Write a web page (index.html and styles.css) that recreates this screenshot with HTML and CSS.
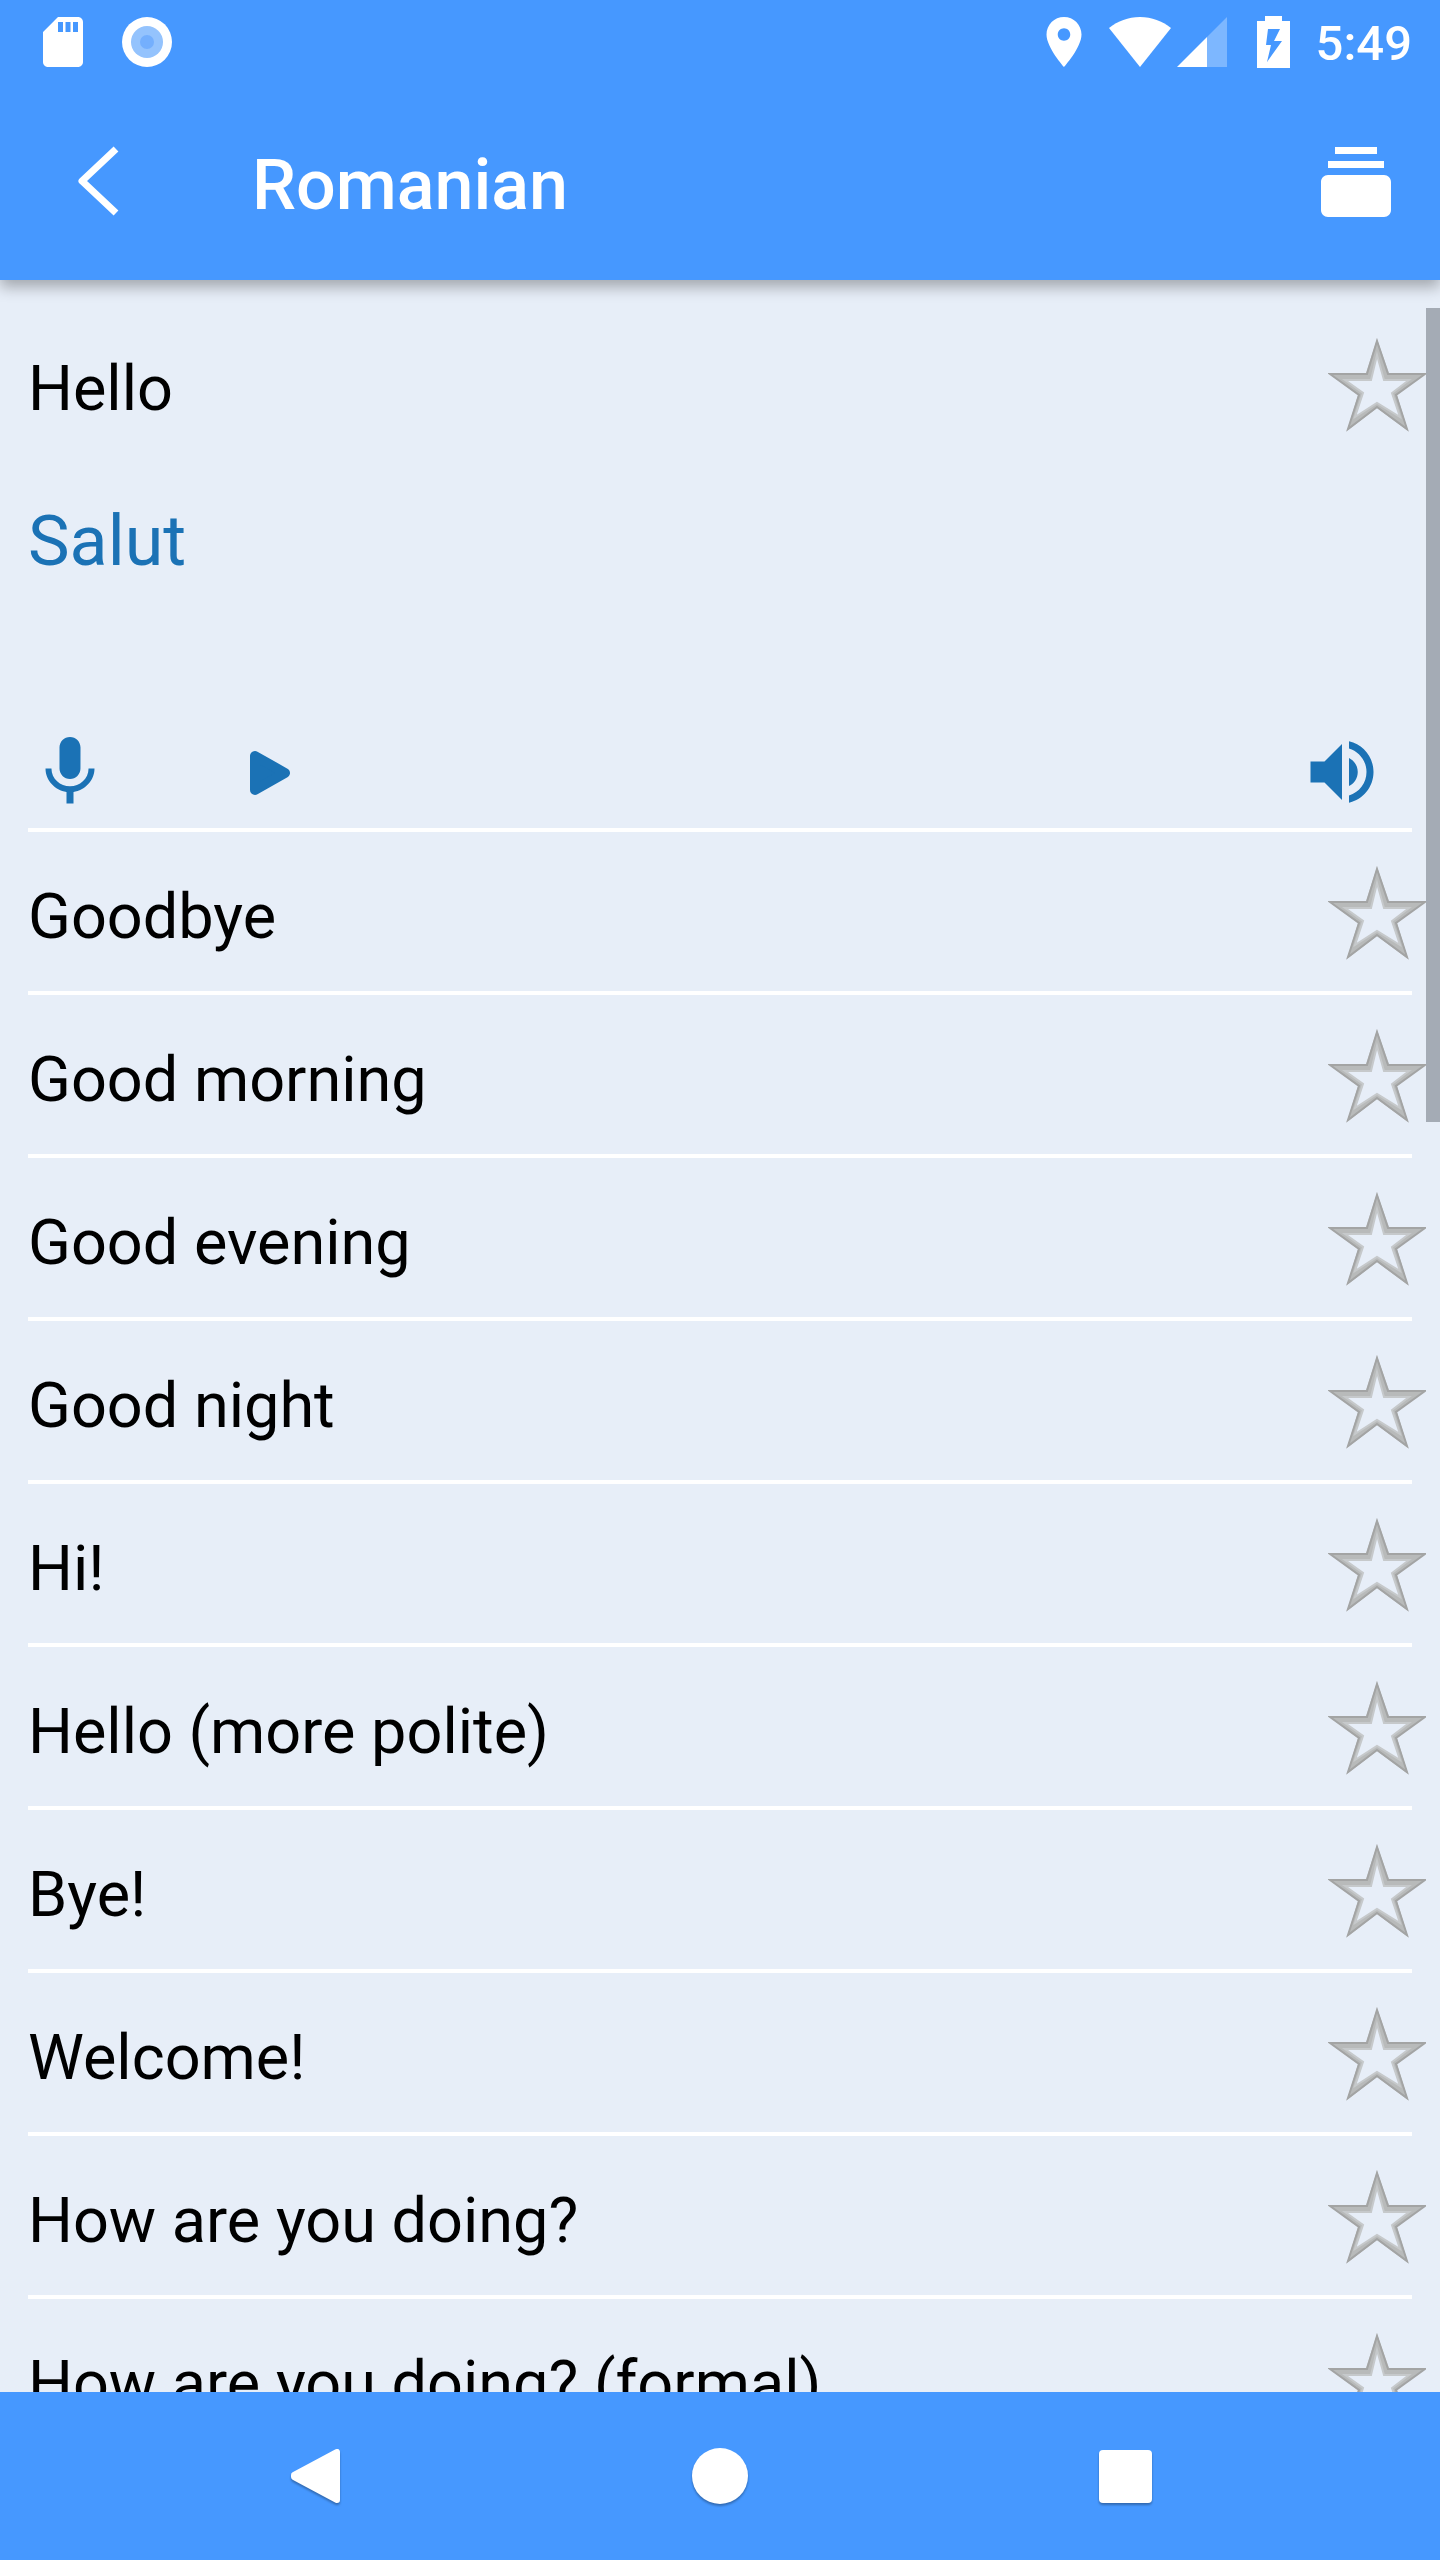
FILE: index.html
```html
<!DOCTYPE html>
<html lang="en">
<head>
    <meta charset="utf-8">
    <meta name="viewport" content="width=device-width, initial-scale=1">
    <title>Romanian</title>
    <link rel="stylesheet" href="styles.css">
</head>
<body>
    <!-- shared icon, used by every row -->
    <svg class="sprite" aria-hidden="true">
        <symbol id="star" viewBox="0 0 98 94">
            <path class="star-band" fill-rule="evenodd" d="M49 1L61 35H98L69 57L80 93L49 70L19 93L30 57L0 35H38zM49 17L43 42H17L35 55L27 79L49 65L72 79L64 55L81 42H56z"/>
            <path class="star-inner" d="M49 17L43 42H17L35 55L27 79L49 65L72 79L64 55L81 42H56z"/>
            <path class="star-edge" d="M49 3L60 36H97L68 57L79 91L49 69L20 91L31 57L2 36H39z"/>
        </symbol>
    </svg>

    <header class="app-header">
        <div class="status-bar">
            <div class="status-left">
                <svg width="60" height="60" viewBox="0 0 24 24"><path d="M18 2h-8L4 8v12c0 1.100.9 2 2 2h12c1.100 0 2-.9 2-2V4c0-1.100-.9-2-2-2zm-6 6h-2V4h2v4zm3 0h-2V4h2v4zm3 0h-2V4h2v4z"/></svg>
                <svg width="60" height="60" viewBox="0 0 60 60">
                    <circle cx="30" cy="30" r="25"/>
                    <circle class="dot-outer" cx="30" cy="30" r="16"/>
                    <circle class="dot-inner" cx="30" cy="30" r="7"/>
                </svg>
            </div>
            <div class="status-right">
                <svg class="location" width="36" height="50" viewBox="5 2 14 20"><path d="M12 2C8.130 2 5 5.130 5 9c0 5.250 7 13 7 13s7-7.750 7-13c0-3.870-3.130-7-7-7zm0 9.500c-1.380 0-2.500-1.120-2.500-2.500s1.120-2.500 2.500-2.500 2.500 1.120 2.500 2.500-1.120 2.500-2.500 2.500z"/></svg>
                <svg class="wifi" width="62" height="50" viewBox="0 0 62 50"><path d="M31 50L0 11C9 4 19 0 31 0s22 4 31 11z"/></svg>
                <svg class="signal" width="50" height="50" viewBox="0 0 50 50">
                    <path class="signal-empty" d="M30 20L50 0v50H30z"/>
                    <path d="M0 50l30-30v30z"/>
                </svg>
                <svg class="battery" width="33" height="52" viewBox="0 0 33 52"><path fill-rule="evenodd" d="M8 0h17v5h8v47H0V5h8zM11 13L9 29h5L10 46L25 25h-8l6-12z"/></svg>
                <span class="clock">5:49</span>
            </div>
        </div>
        <div class="toolbar">
            <button class="icon-btn" aria-label="Back">
                <svg width="84" height="84" viewBox="0 0 84 84"><path class="chevron" d="M60 9L26 41L60 73"/></svg>
            </button>
            <h1>Romanian</h1>
            <button class="icon-btn" aria-label="Flashcards">
                <svg width="84" height="84" viewBox="0 0 24 24"><path d="M20 8H4V6h16v2zm-2-6H6v2h12V2zm4 10v8c0 1.100-.9 2-2 2H4c-1.100 0-2-.9-2-2v-8c0-1.100.9-2 2-2h16c1.100 0 2 .9 2 2z"/></svg>
            </button>
        </div>
    </header>

    <main class="content">
        <ul class="phrases">
            <li>
                <div class="phrase">
                    <span>Hello</span>
                    <button class="star-btn" aria-label="Favorite Hello"><svg><use href="#star"/></svg></button>
                </div>
                <p class="translation" lang="ro">Salut</p>
                <div class="controls">
                    <button class="icon-btn" aria-label="Record">
                        <svg width="84" height="84" viewBox="0 1 24 24"><path d="M12 15c1.660 0 2.990-1.340 2.990-3L15 6c0-1.660-1.340-3-3-3S9 4.340 9 6v6c0 1.660 1.340 3 3 3zm5.300-3c0 3-2.540 5.100-5.300 5.100S6.700 15 6.700 12H5c0 3.420 2.720 6.230 6 6.720V22h2v-3.280c3.280-.48 6-3.300 6-6.720h-1.700z"/></svg>
                    </button>
                    <button class="icon-btn" aria-label="Play recording">
                        <svg width="84" height="84" viewBox="0 0 84 84"><path class="play" d="M31 26V60L61 43z"/></svg>
                    </button>
                    <button class="icon-btn speak" aria-label="Listen">
                        <svg width="84" height="84" viewBox="0 0 24 24"><path d="M3 9v6h4l5 5V4L7 9H3zm13.500 3c0-1.770-1.020-3.290-2.500-4.030v8.050c1.480-.73 2.500-2.250 2.500-4.020zM14 3.230v2.060c2.890.86 5 3.540 5 6.710s-2.110 5.850-5 6.710v2.060c4.010-.91 7-4.490 7-8.770s-2.990-7.860-7-8.770z"/></svg>
                    </button>
                </div>
            </li>
            <li>
                <div class="phrase">
                    <span>Goodbye</span>
                    <button class="star-btn" aria-label="Favorite Goodbye"><svg><use href="#star"/></svg></button>
                </div>
            </li>
            <li>
                <div class="phrase">
                    <span>Good morning</span>
                    <button class="star-btn" aria-label="Favorite Good morning"><svg><use href="#star"/></svg></button>
                </div>
            </li>
            <li>
                <div class="phrase">
                    <span>Good evening</span>
                    <button class="star-btn" aria-label="Favorite Good evening"><svg><use href="#star"/></svg></button>
                </div>
            </li>
            <li>
                <div class="phrase">
                    <span>Good night</span>
                    <button class="star-btn" aria-label="Favorite Good night"><svg><use href="#star"/></svg></button>
                </div>
            </li>
            <li>
                <div class="phrase">
                    <span>Hi!</span>
                    <button class="star-btn" aria-label="Favorite Hi!"><svg><use href="#star"/></svg></button>
                </div>
            </li>
            <li>
                <div class="phrase">
                    <span>Hello (more polite)</span>
                    <button class="star-btn" aria-label="Favorite Hello (more polite)"><svg><use href="#star"/></svg></button>
                </div>
            </li>
            <li>
                <div class="phrase">
                    <span>Bye!</span>
                    <button class="star-btn" aria-label="Favorite Bye!"><svg><use href="#star"/></svg></button>
                </div>
            </li>
            <li>
                <div class="phrase">
                    <span>Welcome!</span>
                    <button class="star-btn" aria-label="Favorite Welcome!"><svg><use href="#star"/></svg></button>
                </div>
            </li>
            <li>
                <div class="phrase">
                    <span>How are you doing?</span>
                    <button class="star-btn" aria-label="Favorite How are you doing?"><svg><use href="#star"/></svg></button>
                </div>
            </li>
            <li>
                <div class="phrase">
                    <span>How are you doing? (formal)</span>
                    <button class="star-btn" aria-label="Favorite How are you doing? (formal)"><svg><use href="#star"/></svg></button>
                </div>
            </li>
        </ul>
        <div class="scrollbar"></div>
    </main>

    <nav class="nav-bar">
        <button aria-label="Back">
            <svg width="60" height="60" viewBox="0 0 60 60"><path class="nav-back" d="M52 6V54L9 31V29z"/></svg>
        </button>
        <button aria-label="Home">
            <svg width="60" height="60" viewBox="0 0 60 60"><circle cx="30" cy="30" r="28"/></svg>
        </button>
        <button aria-label="Recent apps">
            <svg width="60" height="60" viewBox="0 0 60 60"><rect x="4" y="4" width="53" height="53" rx="4"/></svg>
        </button>
    </nav>
</body>
</html>
```

FILE: styles.css
```css
* {
    box-sizing: border-box;
}

body {
    margin: 0;
    height: 100vh;
    display: flex;
    flex-direction: column;
    overflow: hidden;
    background: #e7eef8;
    color: #000;
    font-family: Roboto, sans-serif;
}

button {
    background: none;
    border: none;
    padding: 0;
    cursor: pointer;
    color: inherit;
}

svg {
    display: block;
    flex-shrink: 0;
    fill: currentColor;
}

.sprite {
    position: absolute;
    width: 0;
    height: 0;
}

/* Header */
.app-header {
    position: relative;
    z-index: 2;
    flex-shrink: 0;
    background: #4698ff;
    color: white;
    box-shadow: 0 7px 14px rgba(0,0,0,0.3);
}

.status-bar {
    height: 84px;
    padding: 0 28px 0 33px;
    display: flex;
    justify-content: space-between;
    align-items: center;
}

.status-left, .status-right {
    display: flex;
    align-items: center;
}

.status-left {
    gap: 24px;
}

.dot-outer {
    fill: #94c3fd;
}

.dot-inner {
    fill: #74affd;
}

.location {
    margin-right: 27px;
}

.wifi {
    margin-right: 6px;
}

.signal {
    margin-right: 30px;
}

.signal-empty {
    opacity: 0.3;
}

.battery {
    margin-right: 26px;
}

.clock {
    padding-top: 4px;
    font-size: 49px;
    font-weight: 500;
    line-height: 56px;
}

.toolbar {
    height: 196px;
    padding: 0 42px 0 56px;
    display: flex;
    align-items: center;
}

.toolbar h1 {
    flex: 1;
    margin: 0 0 0 112px;
    padding-top: 6px;
    font-size: 70px;
    font-weight: 500;
    line-height: 84px;
}

.chevron {
    fill: none;
    stroke: currentColor;
    stroke-width: 7;
    stroke-linejoin: round;
}

/* Phrase list */
.content {
    position: relative;
    flex: 1;
    min-height: 0;
    overflow: hidden;
}

.phrases {
    list-style: none;
    margin: 0 28px;
    padding: 24px 0 0;
}

.phrases li {
    border-bottom: 4px solid white;
}

.phrase {
    display: flex;
    justify-content: space-between;
    align-items: flex-start;
    padding: 34px 0 31px;
    font-size: 63px;
    line-height: 94px;
}

.phrase span {
    padding-top: 4px;
    margin-bottom: -4px;
}

.star-btn {
    margin-right: -14px;
}

.star-btn svg {
    width: 98px;
    height: 94px;
}

.star-band {
    fill: #b8baba;
}

.star-inner {
    fill: none;
    stroke: #c6c9cb;
    stroke-width: 2;
}

.star-edge {
    fill: none;
    stroke: #a3a4a4;
    stroke-width: 2;
}

.translation {
    margin: 36px 0 147px;
    color: #1b72b5;
    font-size: 70px;
    line-height: 84px;
}

.controls {
    display: flex;
    gap: 112px;
    padding: 0 28px 14px 0;
    color: #1b72b5;
}

.speak {
    margin-left: auto;
}

.play {
    stroke: currentColor;
    stroke-width: 10;
    stroke-linejoin: round;
}

.scrollbar {
    position: absolute;
    top: 28px;
    right: 0;
    width: 14px;
    height: 814px;
    background: #a4abb5;
}

/* System navigation */
.nav-bar {
    flex-shrink: 0;
    height: 168px;
    padding: 0 112px;
    display: flex;
    background: #4698ff;
    color: white;
}

.nav-bar button {
    flex: 1;
    display: flex;
    justify-content: center;
    align-items: center;
}

.nav-bar svg {
    overflow: visible;
    filter: drop-shadow(0 2px 1px rgba(0,0,0,0.3));
}

.nav-back {
    stroke: currentColor;
    stroke-width: 6;
    stroke-linejoin: round;
}
```
